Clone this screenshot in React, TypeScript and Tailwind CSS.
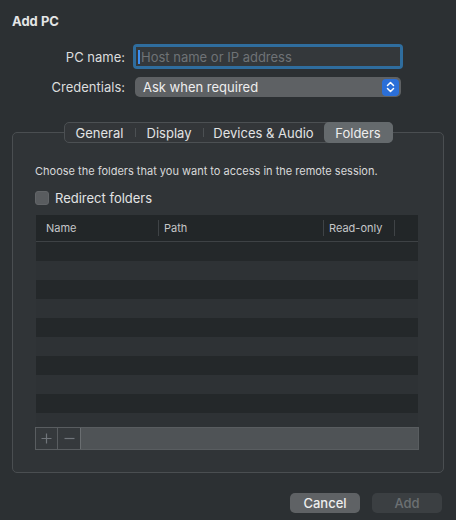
import React from "react";

export default function App() {
  const rows = Array.from({ length: 10 }, (_, i) => i);
  return (
    <div
      className="w-[456px] h-[520px] bg-[#2c3033] text-[#dfe0e1] flex flex-col overflow-hidden"
      style={{ fontFamily: "Inter, 'Liberation Sans', sans-serif" }}
    >
      <div className="pl-[12px] pt-[13px] text-[13px] leading-[16px] font-bold text-[#e4e5e6]">Add PC</div>

      <div className="mt-[15px] flex items-center">
        <div className="w-[125px] text-right text-[13px] leading-[16px] text-[#dcddde]">PC name:</div>
        <div className="ml-[8px] w-[270px] h-[25px] rounded-[4px] bg-[#2f6d9e] p-[3px]">
          <div className="w-full h-full bg-[#34383b] flex items-center pl-[2px]">
            <div className="w-[2px] h-[14px] bg-[#3d8ff0]" />
            <span className="ml-[1px] text-[13px] leading-[16px] text-[#6f7376]">Host name or IP address</span>
          </div>
        </div>
      </div>

      <div className="mt-[8px] flex items-center">
        <div className="w-[125px] text-right text-[13px] leading-[16px] text-[#dcddde]">Credentials:</div>
        <div className="ml-[10px] w-[266px] h-[20px] rounded-[5px] bg-[#5e6164] flex items-center justify-between pl-[8px] pr-[2px]">
          <span className="text-[13px] leading-[16px] text-[#eeeeee]">Ask when required</span>
          <div className="w-[17px] h-[17px] rounded-[4px] bg-[#2b6fd8] flex items-center justify-center">
            <svg width="9" height="12" viewBox="0 0 9 12" fill="none" stroke="#ffffff" strokeWidth="1.5" strokeLinecap="round" strokeLinejoin="round">
              <path d="M1.5 4.5 L4.5 1.5 L7.5 4.5" />
              <path d="M1.5 7.5 L4.5 10.5 L7.5 7.5" />
            </svg>
          </div>
        </div>
      </div>

      <div className="mt-[35px] mx-[12px] h-[341px] rounded-[5px] border border-[#4a4e51] bg-[#303437] flex flex-col">
        <div className="-mt-[11px] self-center flex h-[21px] rounded-[5px] border border-[#4c5053] bg-[#333639] text-[13px] leading-[16px] text-[#e2e3e4]">
          <div className="w-[70px] flex items-center justify-center">General</div>
          <div className="my-[5px] w-px bg-[#4c5053]" />
          <div className="w-[67px] flex items-center justify-center">Display</div>
          <div className="my-[5px] w-px bg-[#4c5053]" />
          <div className="w-[120px] flex items-center justify-center">Devices &amp; Audio</div>
          <div className="-my-px -mr-px w-[69px] rounded-[5px] bg-[#656a6d] flex items-center justify-center text-[#eeeeee]">Folders</div>
        </div>

        <div className="mt-[21px] ml-[22px] text-[11px] leading-[14px] text-[#d8d9da]">
          Choose the folders that you want to access in the remote session.
        </div>

        <div className="mt-[12px] ml-[22px] flex items-center">
          <div className="w-[14px] h-[14px] rounded-[3px] bg-[#595c5f] border border-[#626568]" />
          <span className="ml-[6px] text-[13px] leading-[16px] text-[#e2e3e4]">Redirect folders</span>
        </div>

        <div className="mt-[9px] ml-[23px] w-[382px] flex flex-col">
          <div className="h-[27px] bg-[#222628] border-b border-[#3e4245] flex items-center text-[11px] leading-[14px] text-[#c5c7c8]">
            <div className="w-[122px] pl-[10px]">Name</div>
            <div className="w-px h-[16px] bg-[#3f4346]" />
            <div className="w-[164px] pl-[5px]">Path</div>
            <div className="w-px h-[16px] bg-[#3f4346]" />
            <div className="w-[70px] pl-[5px]">Read-only</div>
            <div className="w-px h-[16px] bg-[#3f4346]" />
          </div>
          {rows.map((i) => (
            <div
              key={i}
              className={
                i % 2 === 0
                  ? "h-[19px] bg-[#24282a]"
                  : i === 9
                  ? "h-[14px] bg-[#2e3235]"
                  : "h-[19px] bg-[#2e3235]"
              }
            />
          ))}
        </div>

        <div className="ml-[22px] w-[384px] h-[23px] flex border border-[#595d60]">
          <div className="w-[22px] bg-[#35393c] border-r border-[#595d60] flex items-center justify-center">
            <svg width="11" height="11" viewBox="0 0 11 11" stroke="#70757a" strokeWidth="1.2">
              <path d="M5.5 0.5 V10.5 M0.5 5.5 H10.5" />
            </svg>
          </div>
          <div className="w-[23px] bg-[#35393c] border-r border-[#6a6e71] flex items-center justify-center">
            <svg width="11" height="11" viewBox="0 0 11 11" stroke="#70757a" strokeWidth="1.2">
              <path d="M0.5 5.5 H10.5" />
            </svg>
          </div>
          <div className="flex-1 bg-[#4f5356]" />
        </div>
      </div>

      <div className="mt-[20px] flex justify-end pr-[14px] gap-[12px]">
        <div className="w-[70px] h-[20px] rounded-[5px] bg-[#5f6265] flex items-center justify-center text-[13px] leading-[16px] text-[#eeeeee] font-medium">Cancel</div>
        <div className="w-[70px] h-[20px] rounded-[5px] bg-[#3b3f42] flex items-center justify-center text-[13px] leading-[16px] text-[#6c7073] font-medium">Add</div>
      </div>
    </div>
  );
}
